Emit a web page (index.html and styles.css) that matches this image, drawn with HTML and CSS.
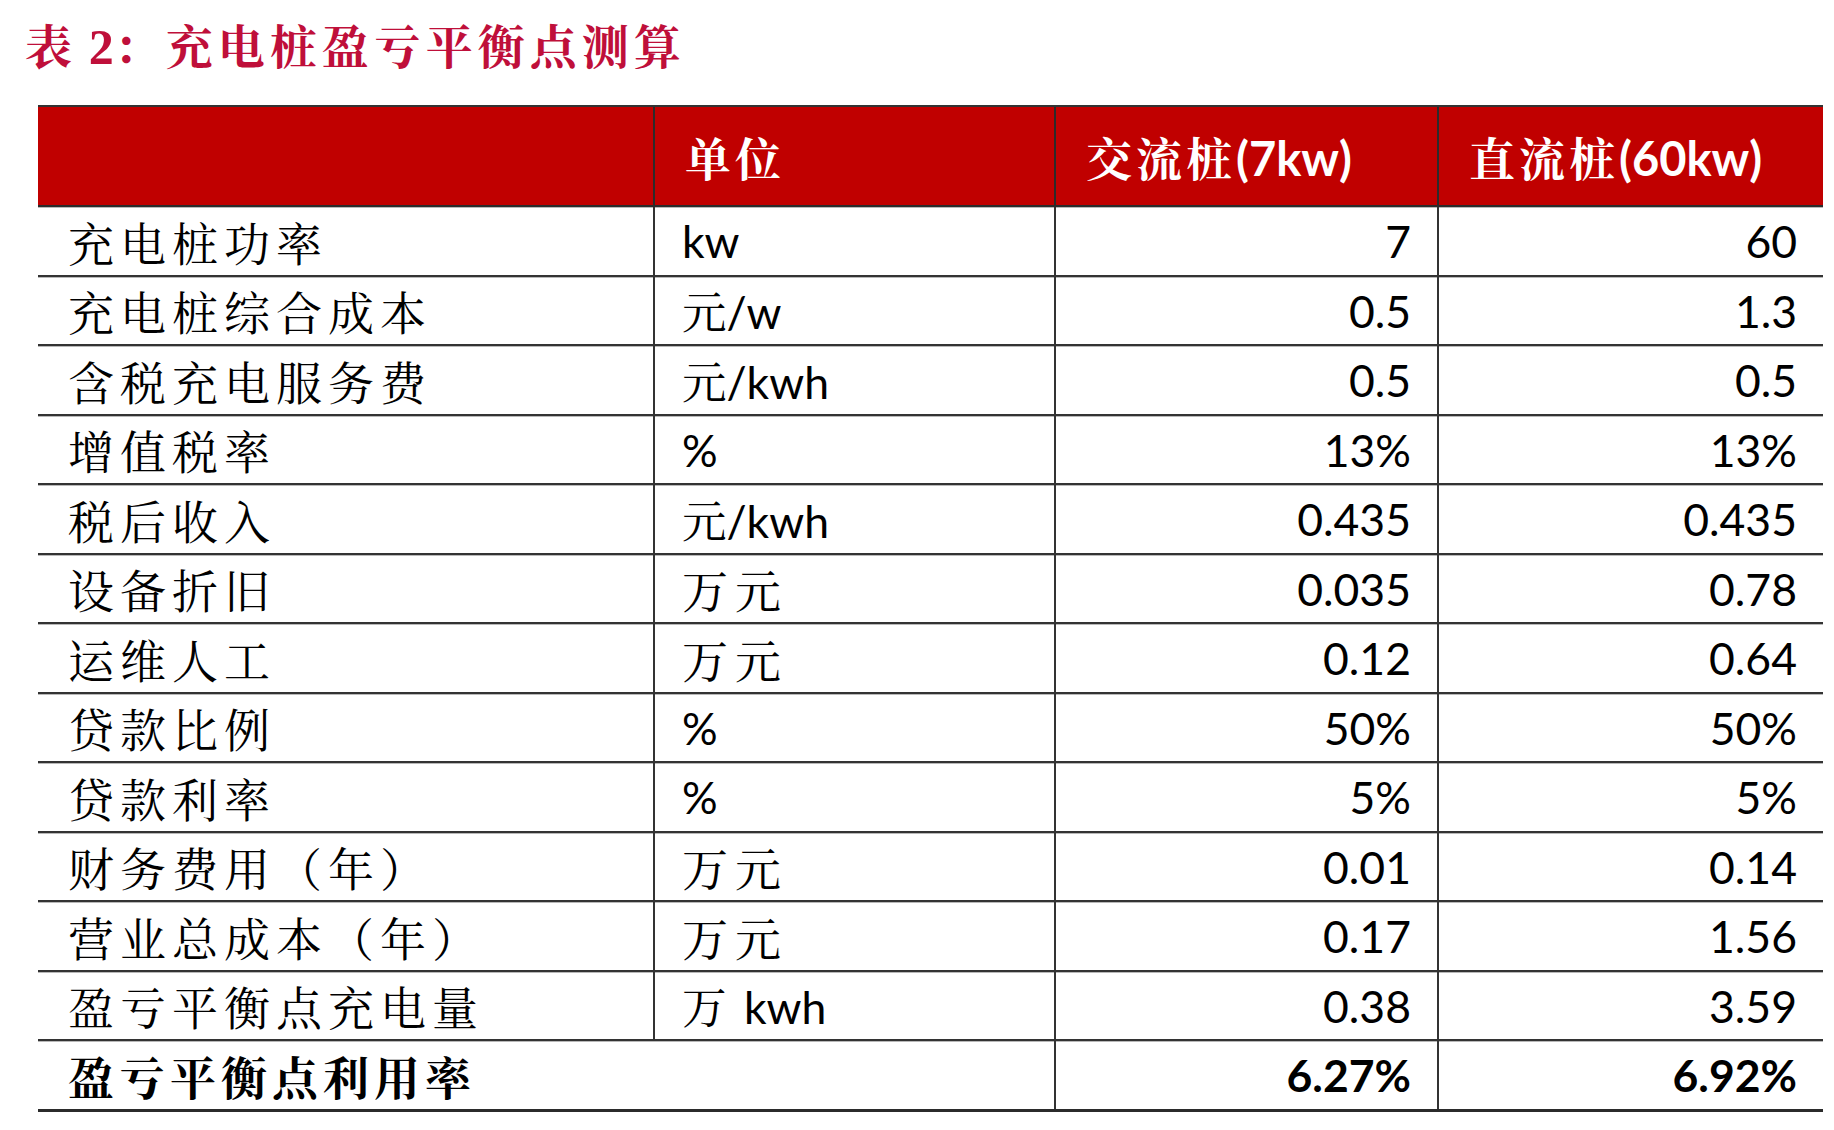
FILE: index.html
```html
<!DOCTYPE html>
<html lang="zh-CN">
<head>
<meta charset="utf-8">
<title>表 2：充电桩盈亏平衡点测算</title>
<link rel="stylesheet" href="styles.css">
</head>
<body>
<div class="page">
  <h1 class="title"><span class="t-zh">表</span> <span class="t-num">2</span><span class="t-zh">：充电桩盈亏平衡点测算</span></h1>
  <table class="data">
    <colgroup>
      <col class="c1"><col class="c2"><col class="c3"><col class="c4">
    </colgroup>
    <thead>
      <tr>
        <th></th>
        <th><span class="zh">单位</span></th>
        <th><span class="zh">交流桩</span>(7kw)</th>
        <th><span class="zh">直流桩</span>(60kw)</th>
      </tr>
    </thead>
    <tbody>
      <tr><td class="name">充电桩功率</td><td class="unit">kw</td><td class="num">7</td><td class="num">60</td></tr>
      <tr><td class="name">充电桩综合成本</td><td class="unit">元/w</td><td class="num">0.5</td><td class="num">1.3</td></tr>
      <tr><td class="name">含税充电服务费</td><td class="unit">元/kwh</td><td class="num">0.5</td><td class="num">0.5</td></tr>
      <tr><td class="name">增值税率</td><td class="unit">%</td><td class="num">13%</td><td class="num">13%</td></tr>
      <tr><td class="name">税后收入</td><td class="unit">元/kwh</td><td class="num">0.435</td><td class="num">0.435</td></tr>
      <tr><td class="name">设备折旧</td><td class="unit"><span class="zh">万元</span></td><td class="num">0.035</td><td class="num">0.78</td></tr>
      <tr><td class="name">运维人工</td><td class="unit"><span class="zh">万元</span></td><td class="num">0.12</td><td class="num">0.64</td></tr>
      <tr><td class="name">贷款比例</td><td class="unit">%</td><td class="num">50%</td><td class="num">50%</td></tr>
      <tr><td class="name">贷款利率</td><td class="unit">%</td><td class="num">5%</td><td class="num">5%</td></tr>
      <tr><td class="name">财务费用（年）</td><td class="unit"><span class="zh">万元</span></td><td class="num">0.01</td><td class="num">0.14</td></tr>
      <tr><td class="name">营业总成本（年）</td><td class="unit"><span class="zh">万元</span></td><td class="num">0.17</td><td class="num">1.56</td></tr>
      <tr><td class="name">盈亏平衡点充电量</td><td class="unit"><span class="wan">万</span> kwh</td><td class="num">0.38</td><td class="num">3.59</td></tr>
      <tr class="total"><td class="name" colspan="2">盈亏平衡点利用率</td><td class="num">6.27%</td><td class="num">6.92%</td></tr>
    </tbody>
  </table>
</div>
</body>
</html>
```
FILE: styles.css
```css
html, body {
  margin: 0;
  padding: 0;
  background: #ffffff;
}

.page {
  padding-top: 19px;
}

.title {
  margin: 0 0 0 25px;
  height: 50px;
  font-family: "Noto Serif CJK SC", "Noto Sans CJK SC", serif;
  font-size: 47px;
  line-height: 50px;
  font-weight: 700;
  color: #bf0f3a;
  white-space: nowrap;
}

.t-zh {
  letter-spacing: 5px;
}

.t-num {
  font-family: "Liberation Serif", "Noto Serif CJK SC", serif;
  font-weight: 700;
  font-size: 50px;
}

.data {
  margin: 36px 0 0 38px;
  width: 1785px;
  table-layout: fixed;
  border-collapse: collapse;
  font-family: "Lato", "Noto Serif CJK SC", "Noto Sans CJK SC", sans-serif;
  color: #000000;
}

.c1 { width: 616px; }
.c2 { width: 401px; }
.c3 { width: 383px; }
.c4 { width: 385px; }

.data th {
  height: 98px;
  padding: 0 0 0 30px;
  background: #c00000;
  color: #ffffff;
  text-align: left;
  font-size: 47px;
  font-weight: 700;
  border-top: 2px solid #333333;
  border-bottom: 2px solid #2b2b2b;
  white-space: nowrap;
}

.data th + th {
  border-left: 2px solid #2b2b2b;
}

.data th .zh {
  font-size: 46px;
  letter-spacing: 4px;
}

.data td {
  height: 67.5px;
  padding: 0;
  font-size: 44.5px;
  border-bottom: 2px solid #333333;
  box-shadow: inset 0 1px 0 #b8b8b8;
  white-space: nowrap;
}

.data td + td {
  border-left: 2px solid #333333;
}

.data td.name {
  padding-left: 30px;
  font-size: 46px;
  letter-spacing: 6px;
}

.data td.unit {
  padding-left: 27px;
}

.data td .zh {
  font-size: 46px;
  letter-spacing: 7px;
}

.data td .wan {
  margin-right: 6px;
}

.data td.num {
  text-align: right;
  padding-right: 26px;
}

.data tr.total td {
  font-weight: 700;
  border-bottom: 3px solid #2b2b2b;
}

.data tr.total td.name {
  letter-spacing: 5px;
}
```
